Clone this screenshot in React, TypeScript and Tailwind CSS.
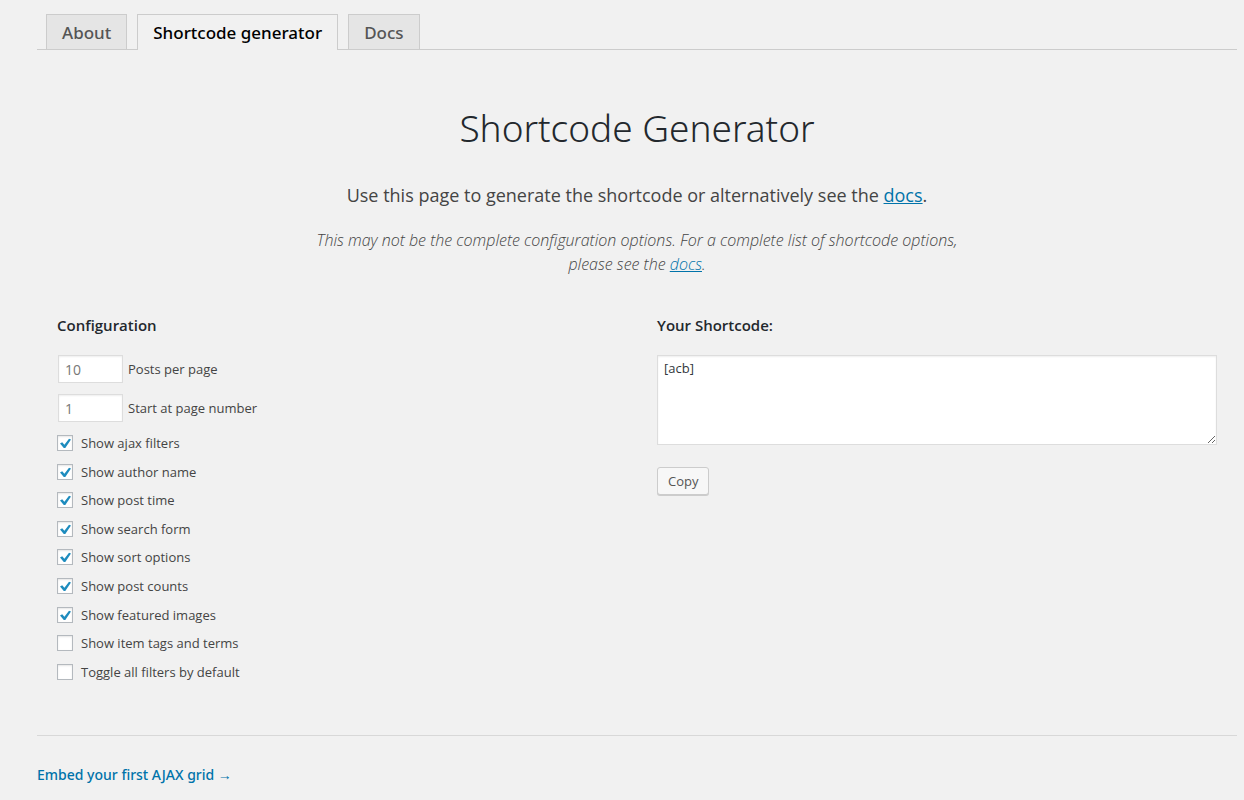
import { useState } from "react";

const tabs = ["About", "Shortcode generator", "Docs"];

const numberFields = [
  { id: "posts-per-page", label: "Posts per page", placeholder: "10" },
  { id: "start-page", label: "Start at page number", placeholder: "1" },
];

const options = [
  { id: "ajax-filters", label: "Show ajax filters", on: true },
  { id: "author-name", label: "Show author name", on: true },
  { id: "post-time", label: "Show post time", on: true },
  { id: "search-form", label: "Show search form", on: true },
  { id: "sort-options", label: "Show sort options", on: true },
  { id: "post-counts", label: "Show post counts", on: true },
  { id: "featured-images", label: "Show featured images", on: true },
  { id: "item-tags", label: "Show item tags and terms", on: false },
  { id: "toggle-filters", label: "Toggle all filters by default", on: false },
];

function Tabs() {
  return (
    <nav aria-label="Sections" className="flex items-end gap-[10px] border-b border-[#cccccc] pl-[9px] pt-[14px]">
      {tabs.map((tab, i) => (
        <a
          key={tab}
          href={`#tab-${i}`}
          aria-current={i === 1 ? "page" : undefined}
          className={
            i === 1
              ? "-mb-px h-9 border border-b-0 border-[#cccccc] bg-[#f1f1f1] px-[15px] font-['Noto_Sans',sans-serif] text-[17px] leading-[35px] font-medium text-black"
              : "h-[35px] border border-b-0 border-[#cccccc] bg-[#e5e5e5] px-[15px] font-['Noto_Sans',sans-serif] text-[17px] leading-[35px] font-medium text-[#555555]"
          }
        >
          {tab}
        </a>
      ))}
    </nav>
  );
}

function Option({ id, label, on }: { id: string; label: string; on: boolean }) {
  const [checked, setChecked] = useState(on);
  return (
    <li className="flex items-center gap-2">
      <span className="grid size-4 place-items-center">
        <input
          id={id}
          type="checkbox"
          checked={checked}
          onChange={(e) => setChecked(e.target.checked)}
          className="col-start-1 row-start-1 size-4 appearance-none border border-[#b4b9be] bg-white shadow-[inset_0_1px_2px_rgba(0,0,0,0.1)]"
        />
        {checked && (
          <svg viewBox="0 0 16 16" className="pointer-events-none z-10 col-start-1 row-start-1 size-4" aria-hidden="true">
            <path d="M3 8.5 5.2 7.3 7.4 9.7 12 3.7 14 4.6 8.3 13H6.8Z" fill="#1e8cbe" />
          </svg>
        )}
      </span>
      <label htmlFor={id}>{label}</label>
    </li>
  );
}

export default function App() {
  const [shortcode, setShortcode] = useState("[acb]");
  return (
    <div className="min-h-screen bg-[#f1f1f1] pr-[7px] pl-[37px] font-['Open_Sans','Noto_Sans',sans-serif] text-[13px] leading-5 text-[#444444]">
      <Tabs />

      <header className="flex flex-col items-center pt-[53px] text-center">
        <h1 className="font-['Noto_Sans',sans-serif] text-[37px] leading-[50px] font-light text-[#23282d]">Shortcode Generator</h1>
        <p className="mt-[27px] text-[18px] leading-[30px]">
          Use this page to generate the shortcode or alternatively see the{" "}
          <a href="#docs" className="text-[#0073aa] underline">docs</a>.
        </p>
        <p className="mt-[18px] max-w-[660px] text-[16px] leading-6 font-light text-[#444444] italic">
          This may not be the complete configuration options. For a complete list of shortcode options,
          please see the <a href="#docs" className="text-[#0073aa] underline">docs</a>.
        </p>
      </header>

      <main className="mt-[37px] grid grid-cols-2 gap-x-10 px-5">
        <section>
          <h2 className="text-[15px] leading-6 font-semibold text-[#23282d]">Configuration</h2>
          <div className="mt-[18px] flex flex-col gap-[11px]">
            {numberFields.map((f) => (
              <div key={f.id} className="flex items-center gap-[5px] pl-px">
                <input
                  id={f.id}
                  type="number"
                  placeholder={f.placeholder}
                  className="h-7 w-[65px] border border-[#dddddd] bg-white px-[6px] text-[14px] shadow-[inset_0_1px_2px_rgba(0,0,0,0.07)] placeholder:text-[#777777]"
                />
                <label htmlFor={f.id}>{f.label}</label>
              </div>
            ))}
          </div>
          <ul className="mt-[7px] grid h-[257px] auto-rows-fr">
            {options.map((o) => (
              <Option key={o.id} {...o} />
            ))}
          </ul>
        </section>

        <section>
          <h2 className="text-[15px] leading-6 font-semibold text-[#23282d]">
            <label htmlFor="shortcode">Your Shortcode:</label>
          </h2>
          <textarea
            id="shortcode"
            value={shortcode}
            onChange={(e) => setShortcode(e.target.value)}
            className="mt-[18px] block h-[90px] w-full resize border border-[#dddddd] bg-white px-[6px] py-[2px] text-[13px] leading-5 text-[#32373c] shadow-[inset_0_1px_2px_rgba(0,0,0,0.07)]"
          />
          <button
            type="button"
            className="mt-[22px] h-7 rounded-[3px] border border-[#cccccc] bg-[#f7f7f7] px-[10px] text-[13px] leading-[26px] text-[#555555] shadow-[0_1px_0_#cccccc]"
          >
            Copy
          </button>
        </section>
      </main>

      <footer className="mt-[49px] border-t border-[#d8d8d8] pt-[29px]">
        <a href="#embed" className="font-['Noto_Sans',sans-serif] text-[14px] leading-5 font-medium text-[#0073aa]">
          Embed your first AJAX grid →
        </a>
      </footer>
    </div>
  );
}
